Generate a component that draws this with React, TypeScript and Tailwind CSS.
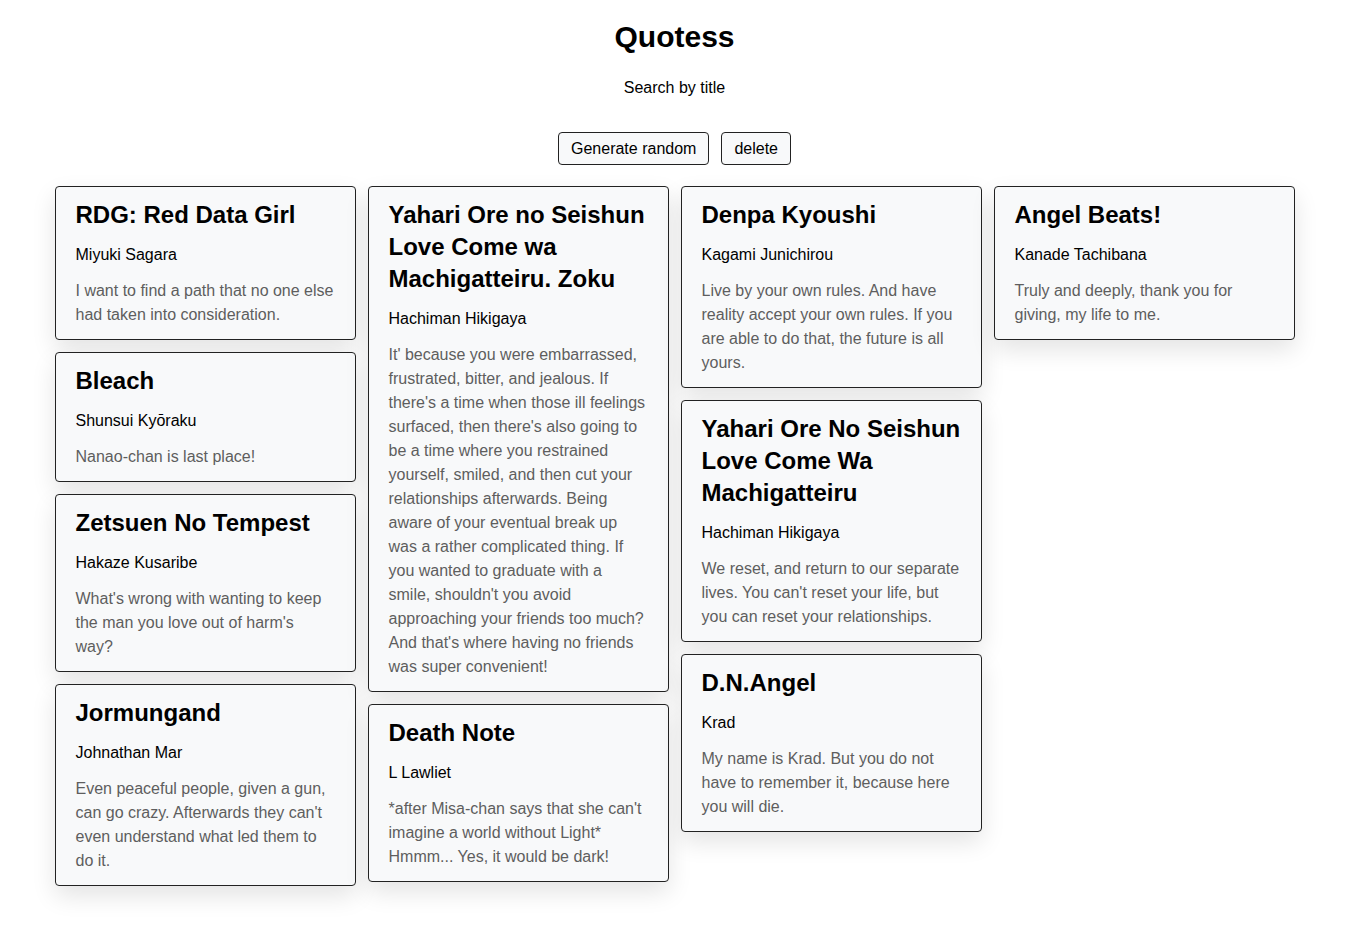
import React from "react";

type Q = { title: string; author: string; quote: string };

const columns: Q[][] = [
  [
    { title: "RDG: Red Data Girl", author: "Miyuki Sagara", quote: "I want to find a path that no one else had taken into consideration." },
    { title: "Bleach", author: "Shunsui Kyōraku", quote: "Nanao-chan is last place!" },
    { title: "Zetsuen No Tempest", author: "Hakaze Kusaribe", quote: "What's wrong with wanting to keep the man you love out of harm's way?" },
    { title: "Jormungand", author: "Johnathan Mar", quote: "Even peaceful people, given a gun, can go crazy. Afterwards they can't even understand what led them to do it." },
  ],
  [
    {
      title: "Yahari Ore no Seishun Love Come wa Machigatteiru. Zoku",
      author: "Hachiman Hikigaya",
      quote:
        "It' because you were embarrassed, frustrated, bitter, and jealous. If there's a time when those ill feelings surfaced, then there's also going to be a time where you restrained yourself, smiled, and then cut your relationships afterwards. Being aware of your eventual break up was a rather complicated thing. If you wanted to graduate with a smile, shouldn't you avoid approaching your friends too much? And that's where having no friends was super convenient!",
    },
    { title: "Death Note", author: "L Lawliet", quote: "*after Misa-chan says that she can't imagine a world without Light* Hmmm... Yes, it would be dark!" },
  ],
  [
    { title: "Denpa Kyoushi", author: "Kagami Junichirou", quote: "Live by your own rules. And have reality accept your own rules. If you are able to do that, the future is all yours." },
    { title: "Yahari Ore No Seishun Love Come Wa Machigatteiru", author: "Hachiman Hikigaya", quote: "We reset, and return to our separate lives. You can't reset your life, but you can reset your relationships." },
    { title: "D.N.Angel", author: "Krad", quote: "My name is Krad. But you do not have to remember it, because here you will die." },
  ],
  [
    { title: "Angel Beats!", author: "Kanade Tachibana", quote: "Truly and deeply, thank you for giving, my life to me." },
  ],
];

function Card({ q }: { q: Q }) {
  return (
    <div className="border border-[#222] rounded-[4px] bg-[#f8f9fa] px-5 py-3 shadow-[0_10px_24px_rgba(0,0,0,0.11)]">
      <h2 className="text-[24px] leading-8 font-bold text-black mb-3">{q.title}</h2>
      <div className="text-[16px] leading-6 text-black mb-3">{q.author}</div>
      <p className="text-[16px] leading-6 text-[#5e5e5e]">{q.quote}</p>
    </div>
  );
}

export default function App() {
  return (
    <div className="min-h-[934px] bg-white font-['Liberation_Sans',Arial,sans-serif] text-black">
      <div className="flex flex-col items-center pt-[19px]">
        <h1 className="text-[30px] leading-9 font-bold">Quotess</h1>
        <div className="mt-[21px] text-[16px] leading-6">Search by title</div>
        <div className="mt-[32px] flex gap-3">
          <button className="h-[33px] px-3 border border-[#222] rounded-[4px] bg-[#f8f9fa] text-[16px]">Generate random</button>
          <button className="h-[33px] px-3 border border-[#222] rounded-[4px] bg-[#f8f9fa] text-[16px]">delete</button>
        </div>
      </div>
      <div className="mt-[21px] flex justify-center gap-3 items-start pb-10">
        {columns.map((col, i) => (
          <div key={i} className="w-[301px] flex flex-col gap-3">
            {col.map((q, j) => (
              <Card key={j} q={q} />
            ))}
          </div>
        ))}
      </div>
    </div>
  );
}
